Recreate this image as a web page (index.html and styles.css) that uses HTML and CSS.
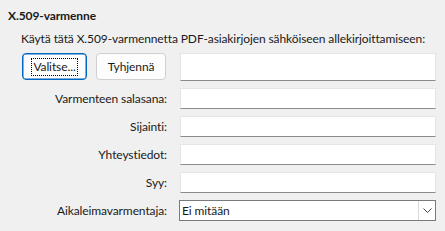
FILE: index.html
```html
<!DOCTYPE html>
<html lang="fi">
<head>
<meta charset="utf-8">
<link rel="stylesheet" href="styles.css">
</head>
<body>
<div class="panel">
  <div class="title">X.509-varmenne</div>
  <div class="desc">Käytä tätä X.509-varmennetta PDF-asiakirjojen sähköiseen allekirjoittamiseen:</div>
  <div class="form">
    <div class="buttons">
      <button class="btn focused"><span class="focus">Valitse...</span></button>
      <button class="btn">Tyhjennä</button>
    </div>
    <div class="field tall"></div>

    <div class="label">Varmenteen salasana:</div>
    <div class="field"></div>

    <div class="label">Sijainti:</div>
    <div class="field"></div>

    <div class="label">Yhteystiedot:</div>
    <div class="field"></div>

    <div class="label">Syy:</div>
    <div class="field"></div>

    <div class="label">Aikaleimavarmentaja:</div>
    <div class="combo">
      <span class="combo-text">Ei mitään</span>
      <span class="combo-btn">
        <svg width="9" height="5" viewBox="0 0 9 5"><path d="M0.5 0.5 L4.5 4.5 L8.5 0.5" fill="none" stroke="#444" stroke-width="1"/></svg>
      </span>
    </div>
  </div>
</div>
</body>
</html>
```

FILE: styles.css
```css
html, body {
  margin: 0;
  padding: 0;
  background: #f0f0f0;
}
body {
  width: 445px;
  height: 231px;
  overflow: hidden;
  font-family: Lato, "Noto Sans", sans-serif;
  font-size: 12px;
  letter-spacing: -0.1px;
  color: #1a1a1a;
}
.panel {
  padding-top: 8px;
}
.title {
  padding-left: 8px;
  font-weight: bold;
  line-height: 16px;
  height: 16px;
}
.desc {
  padding-left: 21px;
  margin-top: 7px;
  line-height: 16px;
  height: 16px;
}
.form {
  margin-top: 6px;
  margin-left: 22px;
  display: grid;
  grid-template-columns: 145px 256px;
  column-gap: 13px;
  grid-auto-rows: 21px;
  row-gap: 7px;
  grid-template-rows: 28px;
  align-items: center;
}
.form > .field.tall {
  margin-bottom: 1px;
}
.buttons {
  display: flex;
  gap: 9px;
  height: 28px;
}
.btn {
  font: inherit;
  letter-spacing: inherit;
  color: #1a1a1a;
  background: #fdfdfd;
  border: 1px solid #d0d0d0;
  border-radius: 4px;
  height: 27px;
  padding: 0;
  width: 70px;
  display: flex;
  align-items: center;
  justify-content: center;
}
.btn.focused {
  width: 65px;
  border: 1px solid #0067c0;
  box-shadow: inset 0 0 0 0.5px #0067c0;
}
.focus {
  outline: 1px dotted #000;
  outline-offset: 0;
  padding: 1px 1px;
  line-height: 14px;
}
.label {
  text-align: right;
  line-height: 21px;
  white-space: nowrap;
}
.field {
  background: #ffffff;
  border: 1px solid #e6e6e6;
  border-bottom: 1px solid #8a8a8a;
  box-sizing: border-box;
  height: 21px;
}
.field.tall {
  height: 28px;
}
.combo {
  margin-left: -1px;
  height: 21px;
  box-sizing: border-box;
  border: 1px solid #7a7a7a;
  background: #fff;
  display: flex;
  align-items: center;
}
.combo-text {
  flex: 1;
  padding-left: 2px;
  line-height: 19px;
}
.combo-btn {
  width: 17px;
  height: 19px;
  box-sizing: border-box;
  border-left: 1px solid #d9d9d9;
  display: flex;
  align-items: center;
  justify-content: center;
}
```
